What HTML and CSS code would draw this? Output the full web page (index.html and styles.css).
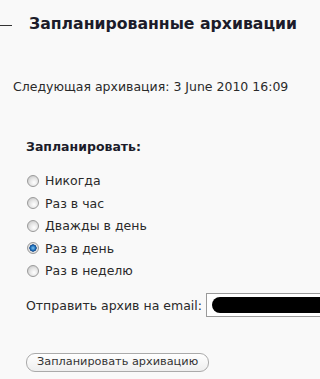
FILE: index.html
```html
<!DOCTYPE html>
<html>
<head>
<meta charset="utf-8">
<link rel="stylesheet" href="styles.css">
</head>
<body>
<div class="page">
  <div class="title-row">
    <span class="dash"></span>
    <h2 class="title">Запланированные архивации</h2>
  </div>
  <p class="next">Следующая архивация: 3 June 2010 16:09</p>
  <div class="schedule">
    <h3 class="label">Запланировать:</h3>
    <ul class="options">
      <li class="option"><span class="radio"></span>Никогда</li>
      <li class="option"><span class="radio"></span>Раз в час</li>
      <li class="option"><span class="radio"></span>Дважды в день</li>
      <li class="option"><span class="radio checked"></span>Раз в день</li>
      <li class="option"><span class="radio"></span>Раз в неделю</li>
    </ul>
    <div class="email-row">
      <span class="email-label">Отправить архив на email:</span>
      <span class="email-input"><span class="redact"></span></span>
    </div>
    <div class="actions">
      <span class="button">Запланировать архивацию</span>
    </div>
  </div>
</div>
</body>
</html>
```
FILE: styles.css
```css
html, body {
  margin: 0;
  padding: 0;
  background: #f9f9f9;
}
body {
  font-family: "DejaVu Sans", Verdana, sans-serif;
  color: #222;
  overflow: hidden;
}
.page {
  width: 307px;
  height: 379px;
}
.title-row {
  display: flex;
  align-items: center;
  gap: 17px;
  padding-top: 12px;
  height: 22px;
}
.dash {
  width: 12px;
  height: 1px;
  background: #333;
  margin-top: 4px;
}
.title {
  margin: 0;
  font-size: 15.7px;
  font-weight: bold;
  color: #1c1c2a;
  white-space: nowrap;
}
.next {
  margin: 45px 0 0 13px;
  font-size: 12.5px;
  line-height: 15px;
  color: #2a2a2a;
}
.schedule {
  padding-left: 26px;
}
.label {
  margin: 45px 0 0 0;
  font-size: 12.5px;
  line-height: 15px;
  font-weight: bold;
  color: #1c1c2a;
}
.options {
  list-style: none;
  margin: 19px 0 0 0;
  padding: 0;
  display: flex;
  flex-direction: column;
  gap: 7.5px;
}
.option {
  display: flex;
  align-items: center;
  gap: 6px;
  font-size: 12.5px;
  height: 15px;
  color: #2a2a2a;
}
.radio {
  width: 10px;
  height: 10px;
  margin-left: 1px;
  border-radius: 50%;
  border: 1px solid #9a9a9a;
  background: radial-gradient(circle at 60% 65%, #ffffff 0, #e6e6e6 45%, #bdbdbd 100%);
  box-sizing: content-box;
}
.radio.checked {
  background: radial-gradient(circle at 50% 50%, #7fc4f0 0, #1a6cb8 35%, #0d3f80 48%, #e9e9e9 55%, #c4c4c4 100%);
}
.email-row {
  display: flex;
  align-items: center;
  margin-top: 15px;
  gap: 4px;
}
.email-label {
  font-size: 12.5px;
  line-height: 15px;
  color: #2a2a2a;
  white-space: nowrap;
}
.email-input {
  flex: none;
  width: 120px;
  height: 22px;
  border: 1px solid #9a9a9a;
  background: #fff;
  display: flex;
  align-items: center;
  padding-left: 5px;
}
.redact {
  width: 120px;
  height: 16px;
  background: #000;
  border-radius: 8px 0 0 8px;
}
.actions {
  margin-top: 33px;
}
.button {
  display: inline-block;
  font-size: 11.3px;
  color: #333;
  padding: 1px 10px 2px 10px;
  height: 14px;
  line-height: 14px;
  border: 1px solid #aaa;
  border-radius: 9px;
  background: linear-gradient(#ffffff, #eeeeee);
}
```
